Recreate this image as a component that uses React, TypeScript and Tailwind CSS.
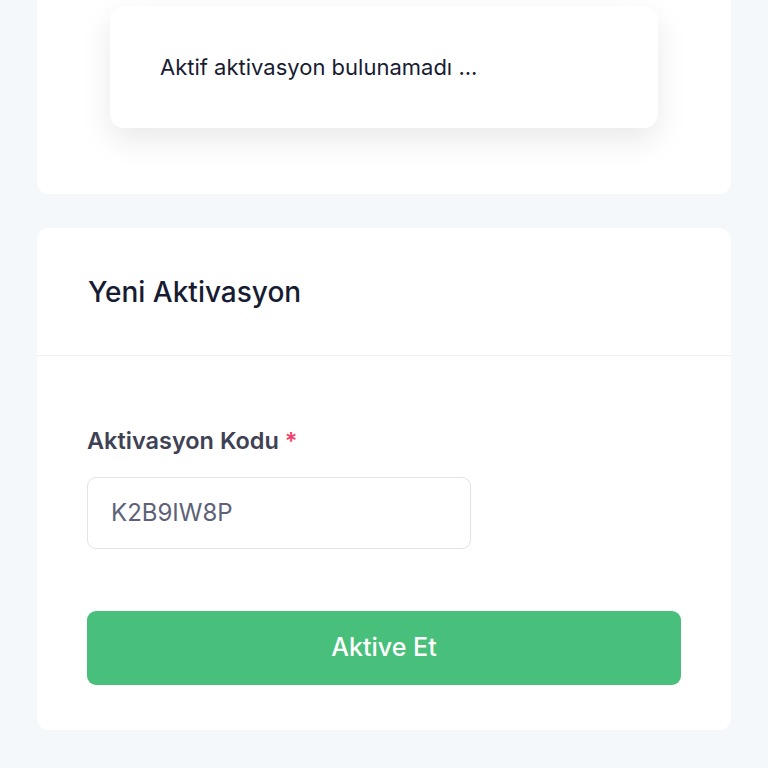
export default function App() {
  return (
    <div
      className="min-h-[768px] w-full overflow-hidden bg-[#f5f8fa] px-[37px] pb-10"
      style={{ fontFamily: "Inter, 'Noto Sans', sans-serif" }}
    >
      {/* active activations card (scrolled) */}
      <div className="-mt-[40px] rounded-b-[12px] bg-white pt-[46px] pb-[66px]">
        <div className="mx-auto flex h-[122px] w-[548px] items-center rounded-[14px] bg-white px-[50px] shadow-[0_12px_32px_rgba(0,0,0,0.09)]">
          <p className="text-[22px] text-[#181c32]">Aktif aktivasyon bulunamadı ...</p>
        </div>
      </div>

      {/* new activation */}
      <div className="mt-[34px] rounded-[12px] bg-white">
        <div className="flex h-[128px] items-center border-b border-[#eff2f5] px-[51px]">
          <h3 className="text-[28px] font-medium text-[#181c32]">Yeni Aktivasyon</h3>
        </div>
        <div className="px-[50px] pt-[71px] pb-[45px]">
          <label className="block text-[23.5px] font-semibold leading-[28px] text-[#3f4254]">
            Aktivasyon Kodu <span className="text-[#f1416c]">*</span>
          </label>
          <div className="mt-[22px] flex h-[72px] w-[384px] items-center rounded-[9px] border border-[#e1e3ea] px-[23px] text-[24px] text-[#5e6278]">
            K2B9IW8P
          </div>
          <button className="mt-[62px] flex h-[74px] w-[594px] items-center justify-center rounded-[9px] bg-[#48bf7a] text-[25px] font-medium text-white">
            Aktive Et
          </button>
        </div>
      </div>
    </div>
  );
}
